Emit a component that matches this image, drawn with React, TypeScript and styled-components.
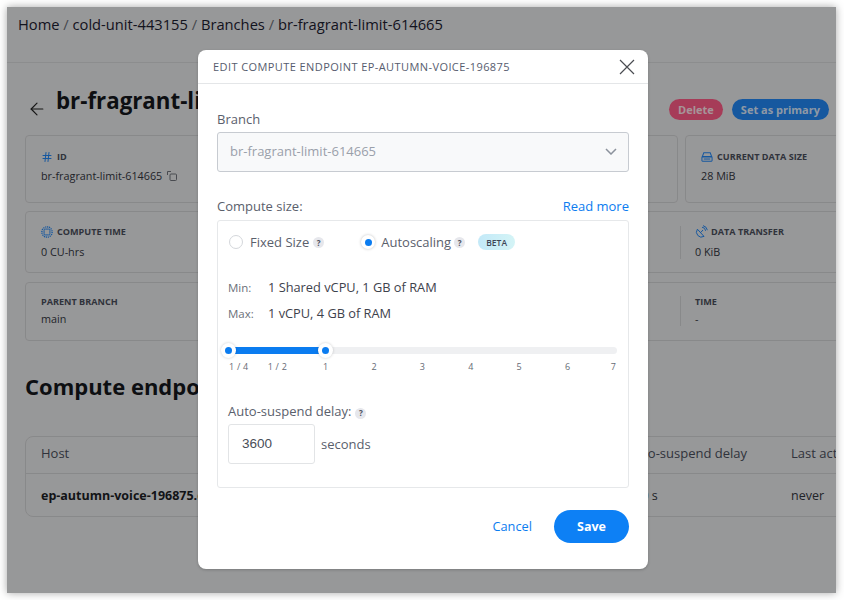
import { ArrowLeft, Hash } from "lucide-react";
import styled, { createGlobalStyle } from "styled-components";

const GlobalStyle = createGlobalStyle`
    html, body {
        margin: 0;
        background: #fff;
    }
    body {
        padding: 7px;
        font-family: "Open Sans", "Liberation Sans", sans-serif;
    }
    * {
        box-sizing: border-box;
    }
`;

const Frame = styled.div`
    position: relative;
    width: 829px;
    height: 586px;
    overflow: hidden;
    background: #e9eaeb;
    box-shadow: 0 0 8px rgba(0, 0, 0, 0.35);
`;

const Overlay = styled.div`
    position: absolute;
    inset: 0;
    background: rgba(0, 0, 0, 0.35);
`;

const Breadcrumbs = styled.header`
    height: 56px;
    padding: 6px 11px 0;
    border-bottom: 1px solid #d8d9db;
    font-size: 14.7px;
    line-height: 22px;
    font-weight: 500;
    color: #1c2030;
`;

const Slash = styled.span`
    color: #6b6f78;
    font-weight: 400;
`;

const Main = styled.main`
    padding: 21px 7px 0 18px;
`;

const TitleRow = styled.div`
    display: flex;
    align-items: flex-start;
    height: 51px;
`;

const Back = styled(ArrowLeft)`
    margin: 15px 0 0 2px;
    color: #222;
`;

const Title = styled.h1`
    margin: 2px 0 0 9px;
    font-size: 22.3px;
    line-height: 30px;
    font-weight: 700;
    color: #15171c;
`;

const Actions = styled.div`
    display: flex;
    gap: 9px;
    margin: 15px 0 0 auto;
`;

const Pill = styled.button<{ $color: string }>`
    height: 21px;
    padding: 0 9px;
    border: 0;
    border-radius: 11px;
    background: ${(p) => p.$color};
    color: rgba(255, 255, 255, 0.85);
    font: 700 11px/21px "Open Sans", sans-serif;
`;

const Stats = styled.div`
    display: flex;
    flex-direction: column;
    width: 1010px;
`;

const StatGrid = styled.div`
    display: grid;
    grid-template-columns: repeat(3, 323px);
    column-gap: 7px;
`;

const StatCard = styled.div<{ $height: number; $top: number; $mt?: number; $wide?: boolean }>`
    display: ${(p) => (p.$wide ? "grid" : "block")};
    grid-template-columns: 654px 1fr;
    height: ${(p) => p.$height}px;
    margin-top: ${(p) => p.$mt ?? 0}px;
    padding: ${(p) => p.$top}px 0 14px ${(p) => (p.$wide ? 0 : 15)}px;
    border: 1px solid #d2d3d5;
    border-radius: 4px;
`;

const StatCell = styled.div<{ $divided?: boolean }>`
    padding-left: ${(p) => (p.$divided ? 14 : 15)}px;
    border-left: ${(p) => (p.$divided ? "1px solid #d2d3d5" : "0")};
`;

const StatLabel = styled.div<{ $gap?: number }>`
    display: flex;
    align-items: center;
    gap: ${(p) => p.$gap ?? 4}px;
    height: 12px;
    font-size: 9.1px;
    line-height: 12px;
    font-weight: 700;
    color: #4b4f5c;
    white-space: nowrap;
`;

const StatValue = styled.div<{ $gap: number }>`
    display: flex;
    align-items: center;
    gap: 4px;
    margin-top: ${(p) => p.$gap}px;
    font-size: 10.8px;
    line-height: 14px;
    color: #33363f;
`;

const BlueIcon = styled.svg`
    flex: none;
    color: #2387f5;
`;

const GreyIcon = styled.svg`
    flex: none;
    color: #70747c;
`;

const SectionTitle = styled.h2`
    margin: 30px 0 0;
    font-size: 22px;
    line-height: 30px;
    font-weight: 700;
    color: #15171c;
`;

const Table = styled.div`
    width: 1010px;
    margin-top: 35px;
    border: 1px solid #d2d3d5;
    border-radius: 8px;
`;

const TableHead = styled.div`
    display: grid;
    grid-template-columns: 601px 164px 1fr;
    align-items: center;
    height: 37px;
    padding-bottom: 5px;
    border-bottom: 1px solid #d2d3d5;
    font-size: 13px;
    color: #4b4f5c;
`;

const TableRow = styled.div`
    display: grid;
    grid-template-columns: 594px 171px 1fr;
    align-items: center;
    height: 42px;
    font-size: 12.5px;
    color: #33363f;
`;

const FirstCell = styled.div<{ $bold?: boolean }>`
    padding-left: 15px;
    font-weight: ${(p) => (p.$bold ? 700 : 400)};
    color: ${(p) => (p.$bold ? "#1c1e26" : "inherit")};
`;

const Modal = styled.div`
    position: absolute;
    left: 191px;
    top: 43px;
    width: 450px;
    height: 519px;
    border-radius: 8px;
    background: #fff;
    box-shadow: 0 1px 3px rgba(0, 0, 0, 0.2);
`;

const ModalHeader = styled.div`
    display: flex;
    align-items: center;
    justify-content: space-between;
    height: 34px;
    padding: 0 13px 0 15px;
    border-bottom: 1px solid #e4e6e8;
`;

const ModalTitle = styled.div`
    font-size: 11px;
    letter-spacing: 0.42px;
    font-weight: 500;
    color: #565c6e;
    text-transform: uppercase;
`;

const CloseIcon = styled.svg`
    display: block;
    color: #4a4c52;
`;

const ModalBody = styled.div`
    padding: 25px 19px 0;
`;

const FieldLabel = styled.div`
    font-size: 13px;
    line-height: 20px;
    font-weight: 500;
    color: #5a606c;
`;

const Select = styled.div`
    display: flex;
    align-items: center;
    justify-content: space-between;
    height: 40px;
    margin-top: 3px;
    padding: 0 11px 2px 12px;
    border: 1px solid #c7cbd1;
    border-radius: 3px;
    background: #f8f9fa;
    font-size: 13px;
    color: #9aa0aa;
`;

const ComputeRow = styled.div`
    display: flex;
    justify-content: space-between;
    margin-top: 24px;
`;

const ReadMore = styled.a`
    font-size: 13px;
    line-height: 20px;
    font-weight: 500;
    color: #0b7cf0;
`;

const Panel = styled.div`
    height: 268px;
    margin-top: 4px;
    padding: 10px 11px 0 10px;
    border: 1px solid #e6e8ea;
    border-radius: 3px;
`;

const ScalingRow = styled.div`
    display: flex;
    align-items: center;
    height: 22px;
    padding-left: 1px;
`;

const Radio = styled.span<{ $checked?: boolean; $ml?: number }>`
    display: flex;
    align-items: center;
    justify-content: center;
    width: 14px;
    height: 14px;
    margin-left: ${(p) => p.$ml ?? 0}px;
    border-radius: 50%;
    border: ${(p) => (p.$checked ? "0" : "1px solid #d4d7db")};
    box-shadow: ${(p) => (p.$checked ? "0 0 3px rgba(0, 0, 0, 0.25)" : "none")};

    &::after {
        content: "";
        display: ${(p) => (p.$checked ? "block" : "none")};
        width: 7px;
        height: 7px;
        border-radius: 50%;
        background: #0b7cf0;
    }
`;

const RadioLabel = styled.span<{ $ml?: number }>`
    margin-left: ${(p) => p.$ml ?? 7}px;
    font-size: 13px;
    font-weight: 500;
    color: #5a606c;
`;

const Help = styled.span<{ $ml?: number }>`
    display: inline-flex;
    align-items: center;
    justify-content: center;
    width: 11px;
    height: 11px;
    margin-left: ${(p) => p.$ml ?? 4}px;
    border-radius: 50%;
    background: #e6e7ec;
    font-size: 8px;
    font-weight: 700;
    color: #4a4f5c;
`;

const Beta = styled.span`
    display: flex;
    align-items: center;
    justify-content: center;
    width: 37px;
    height: 16px;
    margin-left: 13px;
    border-radius: 8px;
    background: linear-gradient(90deg, #c3e9f8, #d4f4f6);
    font-size: 8.5px;
    font-weight: 600;
    color: #3e4656;
`;

const SpecRow = styled.div<{ $mt: number }>`
    display: flex;
    align-items: center;
    height: 20px;
    margin-top: ${(p) => p.$mt}px;
`;

const SpecName = styled.span`
    width: 40px;
    font-size: 11.5px;
    color: #6b7079;
`;

const SpecValue = styled.span`
    font-size: 12.8px;
    color: #3e424c;
`;

const Track = styled.div`
    position: relative;
    height: 7px;
    margin-top: 24px;
    border-radius: 4px;
    background: #eff0f2;
`;

const TrackFill = styled.div<{ $width: number }>`
    width: ${(p) => p.$width}px;
    height: 100%;
    background: #0b7cf0;
`;

const Handle = styled.span<{ $at: number }>`
    position: absolute;
    top: -4px;
    left: ${(p) => p.$at - 7.5}px;
    display: flex;
    align-items: center;
    justify-content: center;
    width: 15px;
    height: 15px;
    border-radius: 50%;
    background: #fff;
    box-shadow: 0 0 3px rgba(0, 0, 0, 0.2);

    &::after {
        content: "";
        width: 7px;
        height: 7px;
        border-radius: 50%;
        background: #0b7cf0;
    }
`;

const Ticks = styled.div`
    display: flex;
    justify-content: space-between;
    height: 12px;
    margin-top: 7px;
    padding: 0 1px;
`;

const Tick = styled.span<{ $align: string }>`
    display: flex;
    justify-content: ${(p) => p.$align};
    width: 0;
    font-size: 9px;
    line-height: 12px;
    letter-spacing: 0.2px;
    color: #666b75;
    white-space: nowrap;
`;

const DelayLabel = styled(FieldLabel)`
    margin-top: 28px;
`;

const DelayRow = styled.div`
    display: flex;
    align-items: center;
    gap: 6px;
    margin-top: 3px;
`;

const DelayInput = styled.div`
    width: 87px;
    height: 40px;
    padding-left: 13px;
    border: 1px solid #e2e4e6;
    border-radius: 3px;
    font: 13.5px/37px "Liberation Sans", sans-serif;
    color: #4a4e58;
`;

const Seconds = styled.span`
    font-size: 13px;
    color: #5a606c;
`;

const Footer = styled.div`
    display: flex;
    align-items: center;
    justify-content: flex-end;
    gap: 22px;
    margin-top: 22px;
`;

const Cancel = styled.a`
    margin-top: -2px;
    font-size: 12.8px;
    font-weight: 500;
    color: #0b7cf0;
`;

const Save = styled.button`
    width: 75px;
    height: 33px;
    border: 0;
    border-radius: 17px;
    background: #0d80f5;
    color: #fff;
    font: 700 12.5px "Open Sans", sans-serif;
`;

const ticks = ["1 / 4", "1 / 2", "1", "2", "3", "4", "5", "6", "7"];

function App() {
    return (
        <Frame>
            <GlobalStyle />
            <Breadcrumbs>
                Home <Slash>/</Slash> cold-unit-443155 <Slash>/</Slash> Branches <Slash>/</Slash>{" "}
                br-fragrant-limit-614665
            </Breadcrumbs>
            <Main>
                <TitleRow>
                    <Back size={20} strokeWidth={1.4} />
                    <Title>br-fragrant-limit-614665</Title>
                    <Actions>
                        <Pill $color="#ff5c87">Delete</Pill>
                        <Pill $color="#2387f5">Set as primary</Pill>
                    </Actions>
                </TitleRow>
                <Stats>
                    <StatGrid>
                        <StatCard $height={68} $top={15}>
                            <StatLabel>
                                <BlueIcon as={Hash} size={12} strokeWidth={2} />
                                ID
                            </StatLabel>
                            <StatValue $gap={6}>
                                br-fragrant-limit-614665
                                <GreyIcon width="12" height="12" viewBox="0 0 12 12" fill="none" stroke="currentColor">
                                    <path d="M5 1.5H1.5V5" />
                                    <rect x="4" y="4" width="6.5" height="6.5" rx="1" />
                                </GreyIcon>
                            </StatValue>
                        </StatCard>
                        <StatCard $height={68} $top={15} />
                        <StatCard $height={68} $top={15}>
                            <StatLabel>
                                <BlueIcon width="12" height="12" viewBox="0 0 13 12" fill="none" stroke="currentColor" strokeWidth="1.1">
                                    <path d="M3 1.5h7l1.5 4h-10z" />
                                    <rect x="1" y="6" width="11" height="4.5" rx="0.6" />
                                    <path d="M3 8.2h7" />
                                </BlueIcon>
                                CURRENT DATA SIZE
                            </StatLabel>
                            <StatValue $gap={6}>28 MiB</StatValue>
                        </StatCard>
                    </StatGrid>
                    <StatCard $wide $height={62} $top={14} $mt={8}>
                        <StatCell>
                            <StatLabel>
                                <BlueIcon width="12" height="12" viewBox="0 0 14 14" fill="none" stroke="currentColor">
                                    <circle cx="7" cy="7" r="6" strokeDasharray="1.4 0.9" strokeWidth="1.6" />
                                    <rect x="3.6" y="3.6" width="6.8" height="6.8" rx="1.6" strokeWidth="1.1" />
                                </BlueIcon>
                                COMPUTE TIME
                            </StatLabel>
                            <StatValue $gap={7}>0 CU-hrs</StatValue>
                        </StatCell>
                        <StatCell $divided>
                            <StatLabel $gap={3}>
                                <BlueIcon width="13" height="14" viewBox="0 0 13 14" fill="none" stroke="currentColor" strokeWidth="1">
                                    <path d="M2.4 4.2a5 5 0 0 0 6.6 7.2z" />
                                    <path d="M5.6 7.6 8 5" />
                                    <path d="M7 2.2a4 4 0 0 1 3.6 3.6" />
                                    <path d="M8 .6a6 6 0 0 1 4.4 4.6" />
                                </BlueIcon>
                                DATA TRANSFER
                            </StatLabel>
                            <StatValue $gap={7}>0 KiB</StatValue>
                        </StatCell>
                    </StatCard>
                    <StatCard $wide $height={59} $top={13} $mt={9}>
                        <StatCell>
                            <StatLabel>PARENT BRANCH</StatLabel>
                            <StatValue $gap={4}>main</StatValue>
                        </StatCell>
                        <StatCell $divided>
                            <StatLabel>TIME</StatLabel>
                            <StatValue $gap={4}>-</StatValue>
                        </StatCell>
                    </StatCard>
                </Stats>
                <SectionTitle>Compute endpoints</SectionTitle>
                <Table>
                    <TableHead>
                        <FirstCell>Host</FirstCell>
                        <div>Auto-suspend delay</div>
                        <div>Last active</div>
                    </TableHead>
                    <TableRow>
                        <FirstCell $bold>ep-autumn-voice-196875.cloud.neon.tech</FirstCell>
                        <div>3600 s</div>
                        <div>never</div>
                    </TableRow>
                </Table>
            </Main>
            <Overlay />
            <Modal>
                <ModalHeader>
                    <ModalTitle>Edit compute endpoint ep-autumn-voice-196875</ModalTitle>
                    <CloseIcon width="16" height="16" viewBox="0 0 16 16" fill="none" stroke="currentColor" strokeWidth="1.2">
                        <path d="M1 1l14 14M15 1 1 15" />
                    </CloseIcon>
                </ModalHeader>
                <ModalBody>
                    <FieldLabel>Branch</FieldLabel>
                    <Select>
                        br-fragrant-limit-614665
                        <svg width="12" height="7" viewBox="0 0 12 7" fill="none" stroke="#8b929c" strokeWidth="1.5">
                            <path d="M1 1l5 5 5-5" />
                        </svg>
                    </Select>
                    <ComputeRow>
                        <FieldLabel>Compute size:</FieldLabel>
                        <ReadMore>Read more</ReadMore>
                    </ComputeRow>
                    <Panel>
                        <ScalingRow>
                            <Radio />
                            <RadioLabel>Fixed Size</RadioLabel>
                            <Help>?</Help>
                            <Radio $checked $ml={37} />
                            <RadioLabel $ml={6}>Autoscaling</RadioLabel>
                            <Help $ml={3}>?</Help>
                            <Beta>BETA</Beta>
                        </ScalingRow>
                        <SpecRow $mt={24}>
                            <SpecName>Min:</SpecName>
                            <SpecValue>1 Shared vCPU, 1 GB of RAM</SpecValue>
                        </SpecRow>
                        <SpecRow $mt={6}>
                            <SpecName>Max:</SpecName>
                            <SpecValue>1 vCPU, 4 GB of RAM</SpecValue>
                        </SpecRow>
                        <Track>
                            <TrackFill $width={97} />
                            <Handle $at={0} />
                            <Handle $at={97} />
                        </Track>
                        <Ticks>
                            {ticks.map((tick, i) => (
                                <Tick key={tick} $align={i === 0 ? "flex-start" : i === ticks.length - 1 ? "flex-end" : "center"}>
                                    {tick}
                                </Tick>
                            ))}
                        </Ticks>
                        <DelayLabel>
                            Auto-suspend delay:
                            <Help>?</Help>
                        </DelayLabel>
                        <DelayRow>
                            <DelayInput>3600</DelayInput>
                            <Seconds>seconds</Seconds>
                        </DelayRow>
                    </Panel>
                    <Footer>
                        <Cancel>Cancel</Cancel>
                        <Save>Save</Save>
                    </Footer>
                </ModalBody>
            </Modal>
        </Frame>
    );
}

export default App;
